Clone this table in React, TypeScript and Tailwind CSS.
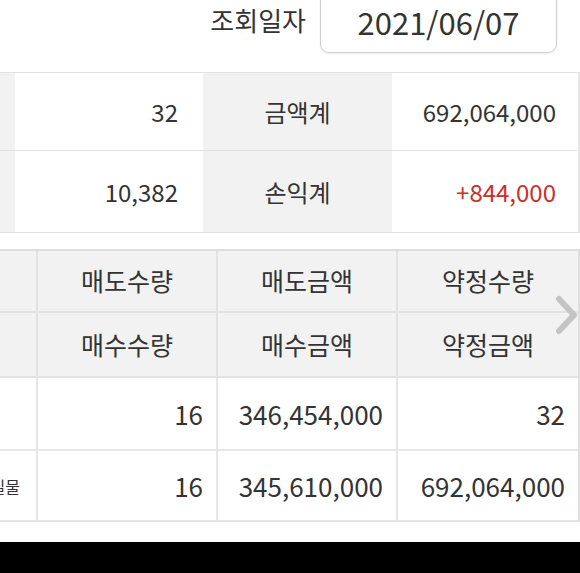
import React from "react";

const FONT = { fontFamily: '"Noto Sans CJK KR", "Noto Sans", sans-serif' };

const SUMMARY = [
  { qty: "32", label: "금액계", value: "692,064,000", red: false },
  { qty: "10,382", label: "손익계", value: "+844,000", red: true }
];

const HEAD_ROWS = [
  ["매도수량", "매도금액", "약정수량"],
  ["매수수량", "매수금액", "약정금액"]
];

const DATA_ROWS = [
  { side: "", cells: ["16", "346,454,000", "32"] },
  { side: "실물", cells: ["16", "345,610,000", "692,064,000"] }
];

function SummaryRow({
  qty,
  label,
  value,
  red,
  height
}: {
  qty: string;
  label: string;
  value: string;
  red: boolean;
  height: string;
}) {
  return (
    <div className={`flex ${height} border-b border-[#e2e2e2] text-[24px]`}>
      <div className="w-[15px] shrink-0 bg-[#f2f2f2]" />
      <div className="flex w-[188px] shrink-0 items-center justify-end pr-[25px]">{qty}</div>
      <div className="flex w-[189px] shrink-0 items-center justify-center bg-[#f2f2f2]">
        {label}
      </div>
      <div
        className={`flex flex-1 items-center justify-end pr-[22px] ${red ? "text-[#c9302c]" : ""}`}
      >
        {value}
      </div>
    </div>
  );
}

export default function App() {
  return (
    <div className="relative flex h-[573px] w-[580px] flex-col overflow-hidden bg-white text-[#333333]" style={FONT}>
      {/* 조회일자 */}
      <div className="flex h-[72px] shrink-0 items-start justify-end pr-[23px]">
        <span className="mr-[14px] mt-[2px] text-[26px] leading-[36px]">조회일자</span>
        <div className="-mt-[10px] flex h-[63px] w-[237px] items-center justify-center rounded-b-[9px] border border-[#cfcfcf] pt-[1px] text-[31px] shadow-[0_1px_2px_rgba(0,0,0,0.08)]">
          2021/06/07
        </div>
      </div>

      {/* 합계 */}
      <div className="shrink-0 border-t border-[#e2e2e2] border-r-2 border-r-[#e6e6e6]">
        <SummaryRow {...SUMMARY[0]} height="h-[78px]" />
        <SummaryRow {...SUMMARY[1]} height="h-[82px]" />
      </div>

      <div className="h-[16px] shrink-0" />

      {/* 체결 내역 */}
      <div className="shrink-0 border-t-2 border-r-2 border-[#dedede]">
        {HEAD_ROWS.map((row, i) => (
          <div
            key={i}
            className={`flex border-b-2 border-[#e2e2e2] bg-[#f2f2f2] text-[25px] ${i === 0 ? "h-[62px]" : "h-[65px]"}`}
          >
            <div className="w-[38px] shrink-0 border-r-2 border-[#e2e2e2]" />
            {row.map((t, j) => (
              <div
                key={t}
                className={`flex w-[180px] shrink-0 items-center justify-center ${j < 2 ? "border-r-2 border-[#e2e2e2]" : ""}`}
              >
                {t}
              </div>
            ))}
          </div>
        ))}
        {DATA_ROWS.map((row, i) => (
          <div
            key={i}
            className={`flex border-b-2 border-[#e6e6e6] text-[26px] ${i === 0 ? "h-[73px]" : "h-[71px]"}`}
          >
            <div className="flex w-[38px] shrink-0 items-center justify-end overflow-hidden whitespace-nowrap border-r-2 border-[#e6e6e6] pr-[16px] text-[16px]">
              <span>{row.side}</span>
            </div>
            {row.cells.map((t, j) => (
              <div
                key={j}
                className={`flex w-[180px] shrink-0 items-center justify-end pr-[13px] ${j < 2 ? "border-r-2 border-[#e6e6e6]" : ""}`}
              >
                {t}
              </div>
            ))}
          </div>
        ))}
      </div>

      <div className="flex-1" />
      <div className="h-[31px] shrink-0 bg-black" />

      {/* 스크롤 화살표 */}
      <svg
        className="absolute left-[555px] top-[295px]"
        width="24"
        height="40"
        viewBox="0 0 24 40"
        fill="none"
      >
        <path d="M4 4 L19 20 L4 36" stroke="#c4c4c4" strokeWidth="6" strokeLinecap="round" strokeLinejoin="round" />
      </svg>
    </div>
  );
}
